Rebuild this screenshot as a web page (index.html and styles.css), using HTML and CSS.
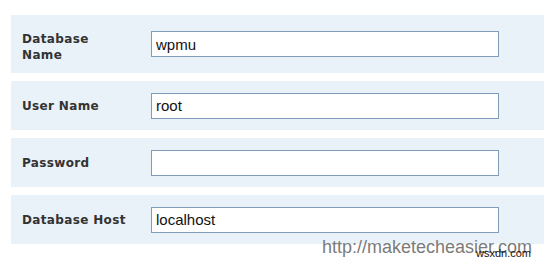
FILE: index.html
```html
<!DOCTYPE html>
<html>
<head>
<meta charset="utf-8">
<link rel="stylesheet" href="styles.css">
</head>
<body>
<div class="form">
  <div class="row row-tall">
    <div class="label label-two">Database<br>Name</div>
    <input class="field" type="text" value="wpmu">
  </div>
  <div class="row">
    <div class="label">User Name</div>
    <input class="field" type="text" value="root">
  </div>
  <div class="row">
    <div class="label">Password</div>
    <input class="field" type="text" value="">
  </div>
  <div class="row">
    <div class="label">Database Host</div>
    <input class="field" type="text" value="localhost">
  </div>
  <div class="watermark">http://maketecheasier.com</div>
  <div class="stamp">wsxdn.com</div>
</div>
</body>
</html>
```

FILE: styles.css
```css
html, body {
  margin: 0;
  padding: 0;
  background: #ffffff;
}

.form {
  position: relative;
  padding: 15px 0 0 11px;
  display: flex;
  flex-direction: column;
  gap: 8px;
  height: 263px;
  box-sizing: border-box;
}

.row {
  display: flex;
  align-items: center;
  height: 49px;
  background: #e9f1f9;
}

.row-tall {
  height: 58px;
}

.label {
  width: 129px;
  padding-left: 11px;
  font-family: "DejaVu Sans", Verdana, sans-serif;
  font-weight: bold;
  font-size: 12px;
  letter-spacing: 0.35px;
  line-height: 16px;
  color: #333333;
}

.label-two {
  padding-top: 6px;
}

.field {
  box-sizing: border-box;
  width: 348px;
  height: 26px;
  margin: 0;
  padding: 0 4px;
  border: 1px solid #7f9db9;
  background: #ffffff;
  font-family: "Liberation Sans", Arial, sans-serif;
  font-size: 15px;
  color: #111111;
  outline: none;
}

.watermark {
  position: absolute;
  left: 322px;
  top: 237px;
  font-family: "Liberation Sans", Arial, sans-serif;
  font-size: 18px;
  line-height: 20px;
  color: #7b7b7b;
}

.stamp {
  position: absolute;
  left: 476px;
  top: 247px;
  font-family: "Liberation Sans", Arial, sans-serif;
  font-size: 11px;
  line-height: 12px;
  color: #111111;
}
```
